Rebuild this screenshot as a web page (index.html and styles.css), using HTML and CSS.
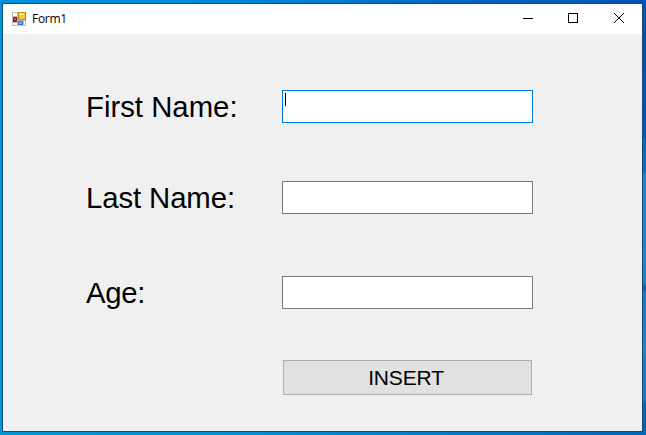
FILE: index.html
```html
<!DOCTYPE html>
<html lang="en">
<head>
<meta charset="utf-8">
<title>Form1</title>
<link rel="stylesheet" href="styles.css">
</head>
<body>
<div class="desktop">
  <main class="window">
    <header class="titlebar">
      <svg class="app-icon" width="14" height="14" viewBox="0 0 14 14" shape-rendering="crispEdges">
        <path fill="#bdbdbd" d="M0 0h14v14H0z"/>
        <path fill="#fff" d="M1 1h4v3H1zM1 11h4v2H1zM12 9h1v4h-1z"/>
        <path fill="#b98a13" d="M6 0h8v8H6z"/>
        <path fill="#f4c83d" d="M7 1h6v6H7z"/>
        <path fill="#ffe78d" d="M7 1h5v2H7z"/>
        <path fill="#9d1717" d="M1 5h4v5H1z"/>
        <path fill="#e4483c" d="M2 6h2v2H2z"/>
        <path fill="#3974c9" d="M6 9h5v4H6z"/>
        <path fill="#75a9f2" d="M7 10h3v2H7z"/>
      </svg>
      <span class="title">Form1</span>
      <div class="controls">
        <svg width="46" height="30" viewBox="0 0 46 30" shape-rendering="crispEdges"><path d="M18 14.5h10"/></svg>
        <svg width="45" height="30" viewBox="0 0 45 30" shape-rendering="crispEdges"><path d="M17.500 9.500h9v9h-9z"/></svg>
        <svg width="46" height="30" viewBox="0 0 46 30"><path d="M18 9l10 10M28 9l-10 10"/></svg>
      </div>
    </header>
    <form class="form">
      <label class="label" for="first">First Name:</label>
      <div class="field focused" id="first"><span class="caret"></span></div>
      <label class="label last" for="last">Last Name:</label>
      <div class="field" id="last"></div>
      <label class="label age" for="age">Age:</label>
      <div class="field age" id="age"></div>
      <button class="insert" type="button">INSERT</button>
    </form>
  </main>
</div>
</body>
</html>
```
FILE: styles.css
```css
* { box-sizing: border-box; }
body { margin: 0; }
.desktop {
  width: 646px;
  height: 435px;
  padding: 3px 3px 3px 2px;
  background:
    linear-gradient(#0055bd 0, #0050b8 60px, #0058c8 138px, #006bcc 140px, #0070cc 172px, #1a86cc 174px, #1685d0 284px, #0860b8 286px, #0860b8 290px, #1478c8 292px, #1a88cc 356px, #147acb 358px, #1478c8 400px, #0066b8 404px, #0066b8) right / 4px 100% no-repeat,
    linear-gradient(90deg, #0090dc, #0089d8 35%, #0062c4 75%, #0052b8) top / 100% 4px no-repeat,
    linear-gradient(90deg, #0097d8, #0090d4 35%, #0078c8 75%, #0066b8) bottom / 100% 4px no-repeat,
    linear-gradient(#0092de, #0097d8);
}
.window {
  display: flex;
  flex-direction: column;
  width: 641px;
  height: 429px;
  border: 1px solid #154a72;
  background: #f0f0f0;
}
.titlebar {
  display: flex;
  align-items: center;
  height: 30px;
  padding-left: 9px;
  background: #fff;
}
.title {
  margin-left: 6px;
  font: 12px/30px "Open Sans", "Noto Sans", sans-serif;
  letter-spacing: -0.3px;
  color: #000;
}
.controls { display: flex; margin-left: auto; }
.controls path { fill: none; stroke: #000; stroke-width: 1; }
.form {
  display: grid;
  grid-template-columns: 196px 251px;
  grid-template-rows: 33px 33px 33px 35px;
  row-gap: 58px;
  padding: 56px 0 0 83px;
  font-family: "Liberation Sans", Arial, sans-serif;
  color: #000;
}
.label { font-size: 29.33px; line-height: 34px; white-space: nowrap; }
.label.last { letter-spacing: -0.1px; }
.label.age { letter-spacing: -0.3px; }
.field { border: 1px solid #7a7a7a; background: #fff; }
.field.focused { border-color: #0078d7; }
.age { height: 33px; margin-top: 4px; }
.caret { display: block; width: 1px; height: 13px; margin: 2px 0 0 2px; background: #000; }
.insert {
  grid-column: 2;
  width: 249px;
  height: 35px;
  margin: -3px 0 0 1px;
  padding: 0 3px 0 0;
  border: 1px solid #adadad;
  background: #e1e1e1;
  color: #000;
  font: 21px/33px "Liberation Sans", Arial, sans-serif;
  letter-spacing: -0.15px;
}
```
